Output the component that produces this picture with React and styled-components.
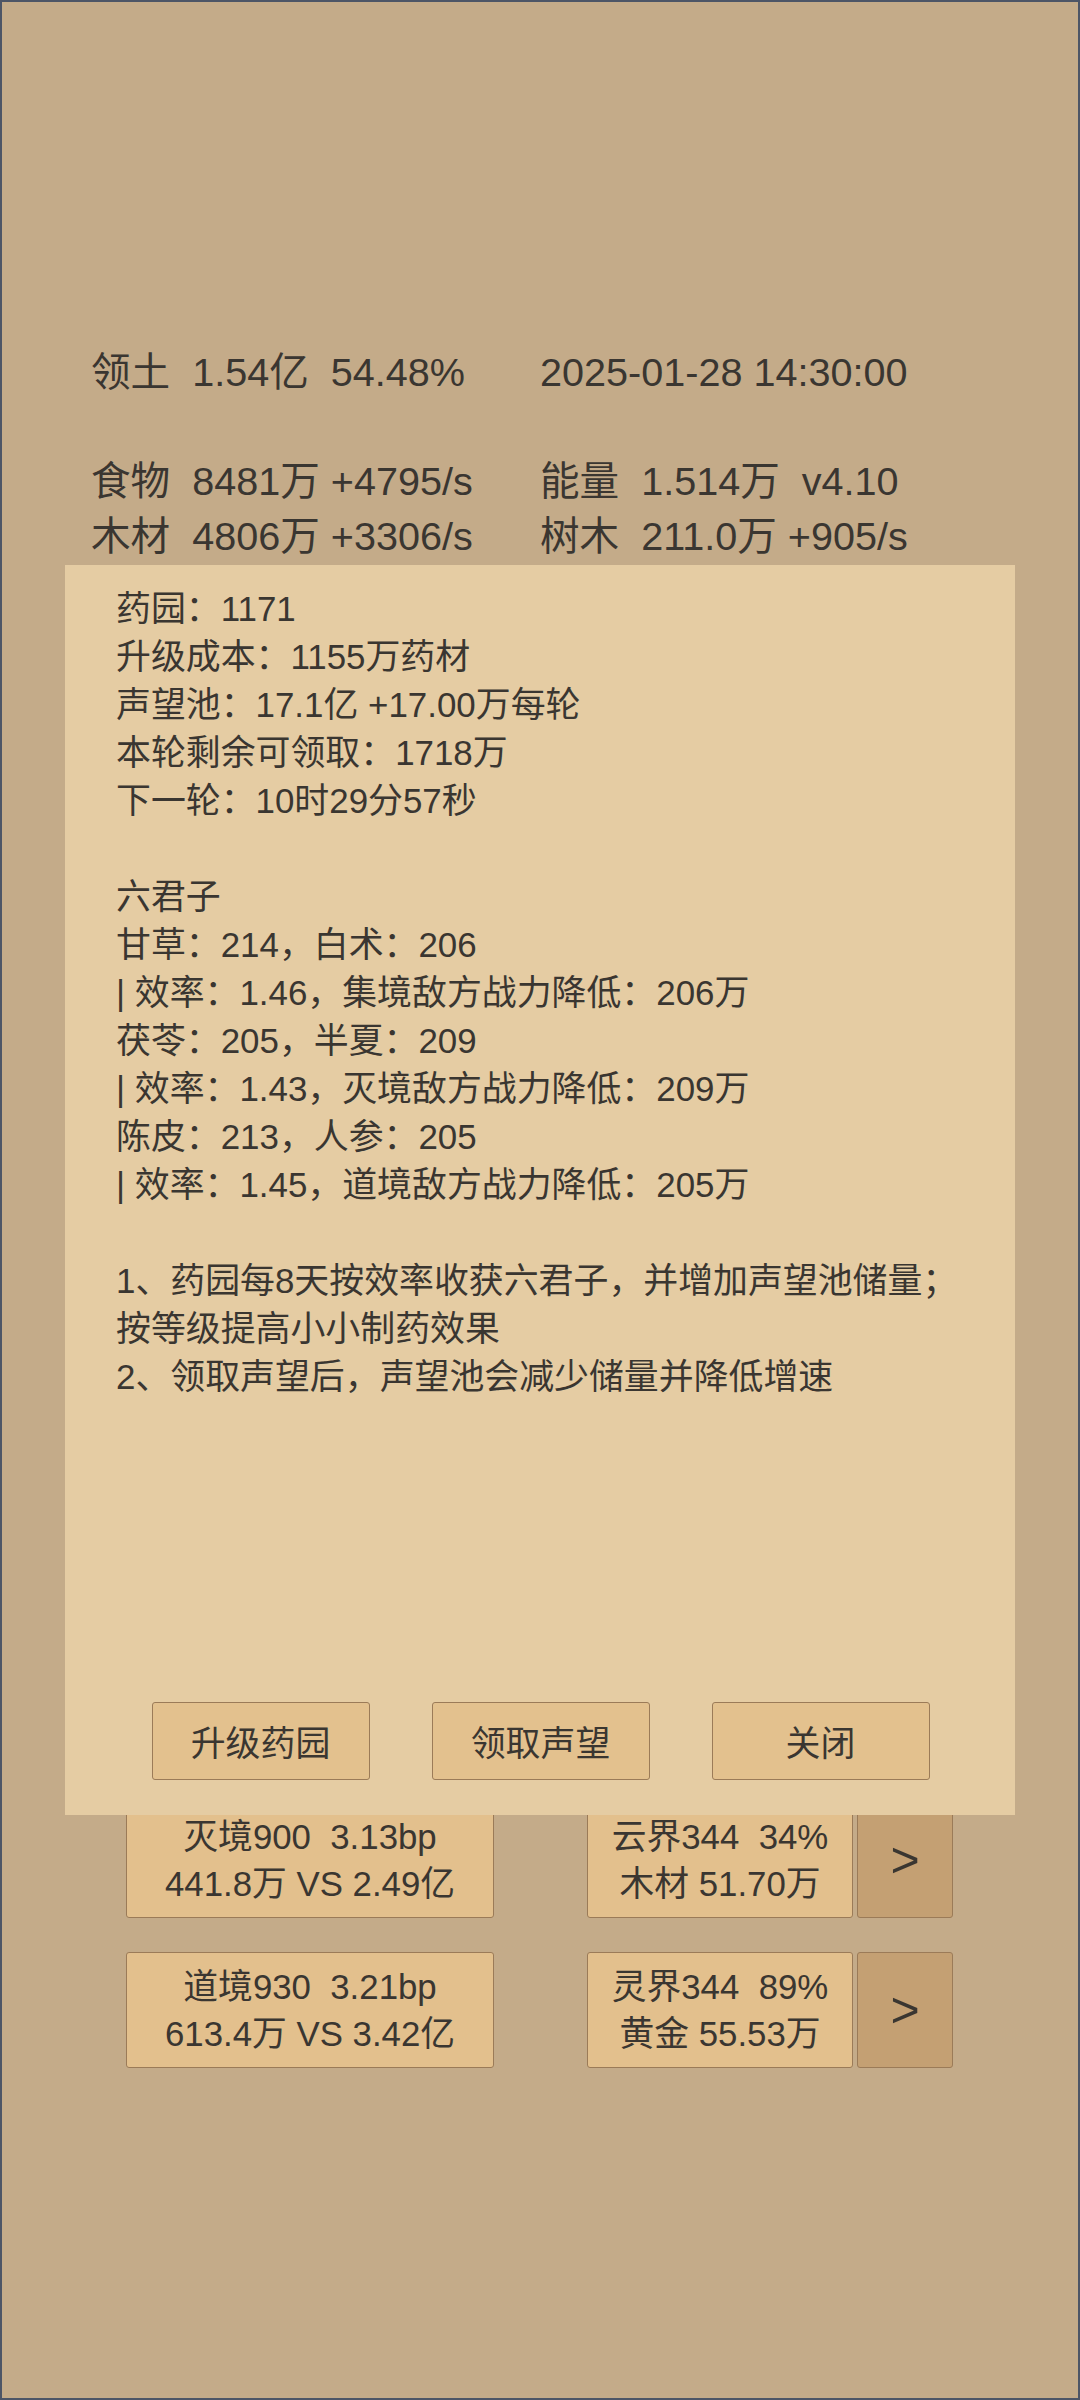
import React from 'react';
import styled, { createGlobalStyle } from 'styled-components';

const GlobalStyle = createGlobalStyle`
  * {
    margin: 0;
    padding: 0;
    box-sizing: border-box;
  }
  body {
    background: #c4ab89;
    font-family: "Liberation Sans", "Noto Sans CJK SC", sans-serif;
    color: #3a3631;
  }
`;

const Page = styled.div`
  position: relative;
  width: 1080px;
  height: 2400px;
  border: 2px solid #4d5566;
  background: #c4ab89;
`;

const Stats = styled.div`
  display: grid;
  grid-template-columns: 449px 1fr;
  padding: 343px 0 0 89px;
  font-size: 39.6px;
  line-height: 54.5px;
`;

const Stat = styled.div`
  white-space: pre;
  min-height: 54.5px;
`;

const Cards = styled.div`
  display: flex;
  flex-direction: column;
  gap: 34px;
  margin-top: 1239px;
  padding: 0 125px 0 124px;
`;

const CardRow = styled.div`
  display: flex;
  justify-content: space-between;
`;

const Card = styled.div`
  width: ${p => p.$w}px;
  height: 116px;
  display: flex;
  flex-direction: column;
  align-items: center;
  justify-content: center;
  background: #e3c08d;
  border: 1px solid #9b7b58;
  border-radius: 3px;
  font-size: 34.8px;
  line-height: 47px;
  white-space: pre;
`;

const Group = styled.div`
  display: flex;
  gap: 4px;
`;

const Arrow = styled.div`
  width: 96px;
  height: 116px;
  display: flex;
  align-items: center;
  justify-content: center;
  background: #c4a073;
  border: 1px solid #9b7b58;
  border-radius: 3px;
  font-size: 50px;
`;

const Dialog = styled.div`
  position: absolute;
  left: 63px;
  top: 563px;
  width: 950px;
  height: 1250px;
  display: flex;
  flex-direction: column;
  padding: 20px 50px 35px 51px;
  background: #e5cca3;
  font-size: 34.9px;
  line-height: 48px;
`;

const Line = styled.p`
  min-height: 48px;
  white-space: pre-wrap;
`;

const Footer = styled.div`
  display: flex;
  justify-content: center;
  gap: 62px;
  margin-top: auto;
`;

const Button = styled.button`
  width: 218px;
  height: 78px;
  background: #e3c18e;
  border: 1px solid #9b7b58;
  border-radius: 3px;
  font-family: inherit;
  font-size: 34.9px;
  color: #3a3631;
`;

const stats = [
  '领土  1.54亿  54.48%', '2025-01-28 14:30:00',
  '', '',
  '食物  8481万 +4795/s', '能量  1.514万  v4.10',
  '木材  4806万 +3306/s', '树木  211.0万 +905/s',
];

const lines = [
  '药园：1171',
  '升级成本：1155万药材',
  '声望池：17.1亿 +17.00万每轮',
  '本轮剩余可领取：1718万',
  '下一轮：10时29分57秒',
  '',
  '六君子',
  '甘草：214，白术：206',
  '| 效率：1.46，集境敌方战力降低：206万',
  '茯苓：205，半夏：209',
  '| 效率：1.43，灭境敌方战力降低：209万',
  '陈皮：213，人参：205',
  '| 效率：1.45，道境敌方战力降低：205万',
  '',
  '1、药园每8天按效率收获六君子，并增加声望池储量；按等级提高小小制药效果',
  '2、领取声望后，声望池会减少储量并降低增速',
];

const rows = [
  { fight: ['灭境900  3.13bp', '441.8万 VS 2.49亿'], realm: ['云界344  34%', '木材 51.70万'] },
  { fight: ['道境930  3.21bp', '613.4万 VS 3.42亿'], realm: ['灵界344  89%', '黄金 55.53万'] },
];

export default function App() {
  return (
    <>
      <GlobalStyle />
      <Page>
        <Stats>
          {stats.map((s, i) => <Stat key={i}>{s}</Stat>)}
        </Stats>
        <Cards>
          {rows.map((r, i) => (
            <CardRow key={i}>
              <Card $w={368}>
                <span>{r.fight[0]}</span>
                <span>{r.fight[1]}</span>
              </Card>
              <Group>
                <Card $w={266}>
                  <span>{r.realm[0]}</span>
                  <span>{r.realm[1]}</span>
                </Card>
                <Arrow>&gt;</Arrow>
              </Group>
            </CardRow>
          ))}
        </Cards>
        <Dialog>
          {lines.map((l, i) => <Line key={i}>{l}</Line>)}
          <Footer>
            <Button>升级药园</Button>
            <Button>领取声望</Button>
            <Button>关闭</Button>
          </Footer>
        </Dialog>
      </Page>
    </>
  );
}
